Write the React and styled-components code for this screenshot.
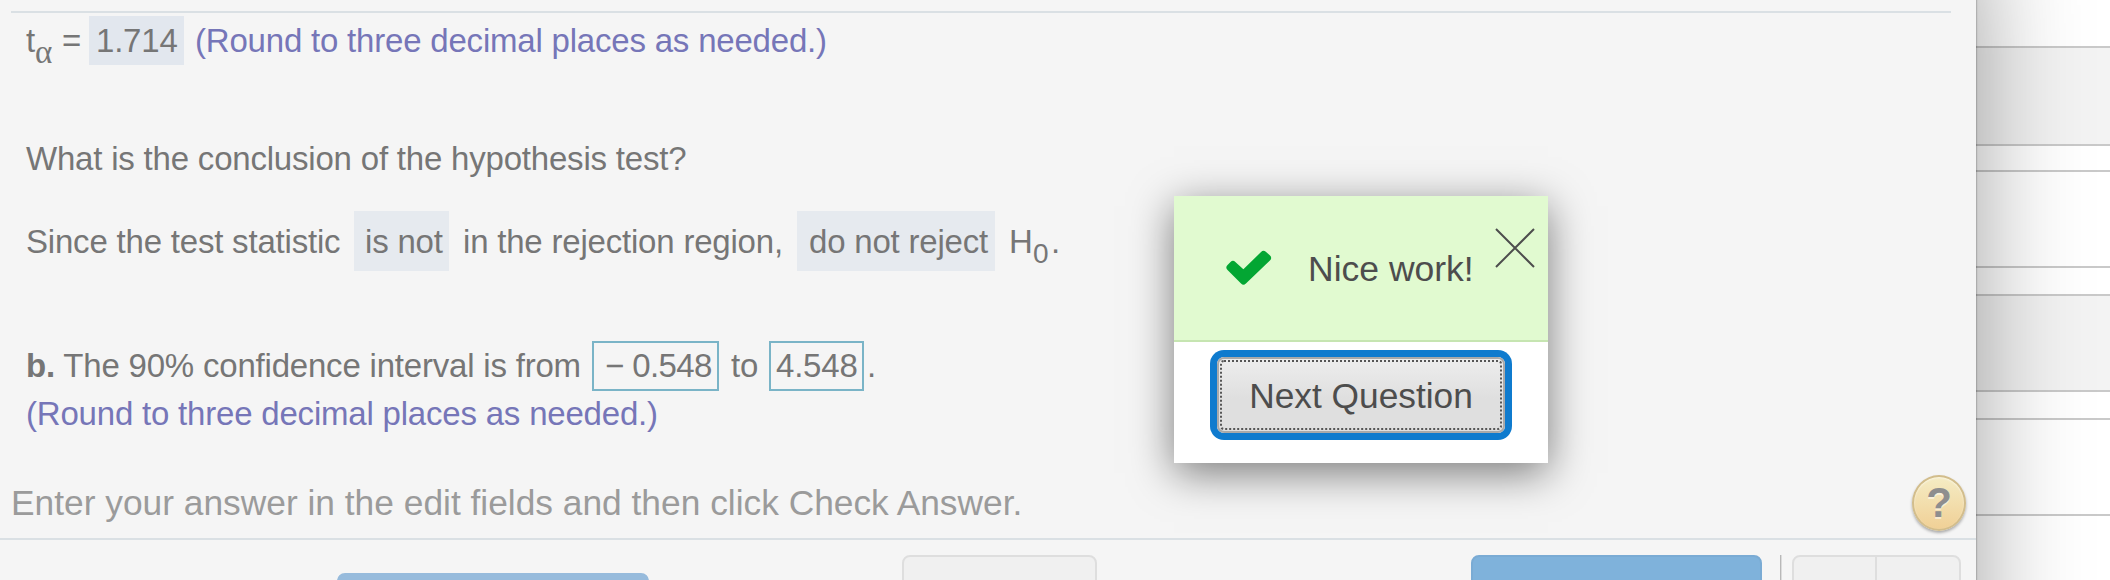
import React from 'react';
import styled, { createGlobalStyle } from 'styled-components';

const Global = createGlobalStyle`
  *, *::before, *::after { box-sizing: border-box; }
  body { margin: 0; background: #fff; overflow: hidden; }
`;

const Page = styled.div`
  position: relative;
  display: flex;
  width: 2110px;
  height: 580px;
  overflow: hidden;
  font-family: "Liberation Sans", Arial, sans-serif;
  color: #767676;
`;

const Player = styled.main`
  position: relative;
  z-index: 1;
  display: flex;
  flex-direction: column;
  width: 1976px;
  height: 580px;
  flex: none;
  background: #f5f5f5;

  &::before {
    content: "";
    position: absolute;
    z-index: -1;
    inset: -60px 0 -200px;
    box-shadow: 0 0 2px rgba(0, 0, 0, 0.5), 0 0 100px rgba(0, 0, 0, 0.38);
  }
`;

const Rule = styled.div`
  flex: none;
  height: 2px;
  margin: ${p => (p.$inset ? '11px 25px 0 11px' : '0')};
  background: #dae0e4;
`;

const Exercise = styled.section`
  display: flex;
  flex-direction: column;
  height: 450px;
  padding-left: 26px;
  font-size: 33px;
  letter-spacing: -0.2px;
`;

const Line = styled.div`
  display: flex;
  align-items: center;
  height: ${p => p.$h}px;
  margin-top: ${p => p.$gap || 0}px;
  line-height: ${p => p.$h}px;
  white-space: pre;
`;

const Phrase = styled.span`
  flex: none;
  width: ${p => (p.$w ? p.$w + 'px' : 'auto')};
  padding-top: ${p => p.$drop || 0}px;
`;

const Hint = styled(Phrase)`
  color: #7676b8;
`;

const Sub = styled.span`
  flex: none;
  width: ${p => p.$w}px;
  padding-top: ${p => p.$drop}px;
  font-family: ${p => (p.$serif ? '"Liberation Serif", serif' : 'inherit')};
  font-size: ${p => p.$size}px;
`;

const Choice = styled.span`
  flex: none;
  width: ${p => p.$w}px;
  height: ${p => p.$h}px;
  padding-left: ${p => p.$pad}px;
  margin: 0 ${p => p.$mr}px ${p => p.$mb || 0}px 0;
  line-height: ${p => p.$lh || p.$h}px;
  background: ${p => p.$bg || '#e6eaef'};
`;

const Field = styled.span`
  flex: none;
  width: ${p => p.$w}px;
  height: 50px;
  padding-left: ${p => p.$pad}px;
  margin-right: ${p => p.$mr}px;
  line-height: 46px;
  letter-spacing: ${p => p.$ls || 0}px;
  border: 2px solid #7ab4c7;
`;

const Prompt = styled.div`
  display: flex;
  align-items: center;
  justify-content: space-between;
  height: 75px;
  padding: 5px 10px 0 11px;
  font-size: 35.35px;
  color: #9b9b9b;
  white-space: nowrap;
`;

const Help = styled.button`
  width: 54px;
  height: 56px;
  padding: 0;
  border: 2px solid #d2bd8c;
  border-radius: 50%;
  background: linear-gradient(#f5ecc4, #f0d096);
  box-shadow: 0 2px 3px rgba(0, 0, 0, 0.3), inset 0 1px 2px rgba(255, 255, 255, 0.6);
  color: #8e8e8e;
  font: bold 42px/50px "Liberation Sans", Arial, sans-serif;
  text-shadow: 0 2px 0 rgba(255, 255, 255, 0.5);
`;

const Footer = styled.footer`
  display: flex;
  align-items: flex-start;
  height: 40px;
  padding: 15px 15px 0 337px;
  overflow: hidden;
`;

const BlueButton = styled.div`
  width: ${p => p.$w}px;
  height: 60px;
  margin: ${p => p.$top || 0}px ${p => p.$mr}px 0 0;
  flex: none;
  border: 2px solid ${p => p.$edge};
  border-radius: 8px;
  background: ${p => p.$bg};
`;

const GreyButton = styled.div`
  display: flex;
  flex: none;
  width: ${p => p.$w}px;
  height: 60px;
  margin-right: ${p => p.$mr || 0}px;
  border: 2px solid #dedede;
  border-radius: 8px;
  background: #f0f0f0;
`;

const Half = styled.div`
  flex: none;
  width: 83px;
  border-right: 2px solid #dedede;
`;

const Separator = styled.div`
  flex: none;
  width: 2px;
  height: 60px;
  margin-right: 10px;
  background: linear-gradient(90deg, #b8b8b8 50%, #dcdcdc 50%);
`;

const Backdrop = styled.aside`
  display: flex;
  flex-direction: column;
  flex: 1;
`;

const Band = styled.div`
  flex: none;
  height: ${p => p.$h}px;
  border-bottom: 2px solid #c9c9c9;
  background: ${p => (p.$grey ? '#f3f3f3' : '#fff')};
`;

const Dialog = styled.div`
  position: absolute;
  z-index: 2;
  left: 1174px;
  top: 196px;
  display: flex;
  flex-direction: column;
  width: 374px;
  height: 267px;
  background: #fff;
  box-shadow: 0 10px 40px rgba(0, 0, 0, 0.5);
  color: #4d4d4d;
`;

const DialogHead = styled.div`
  display: flex;
  align-items: center;
  height: 146px;
  padding: 0 12px 0 52px;
  border-bottom: 2px solid #c6e5b1;
  background: #e1fad0;
  font-size: 35.5px;
`;

const Check = styled.svg`
  flex: none;
  width: 46px;
  height: 36px;
  margin-right: 36px;
`;

const Message = styled.span`
  flex: 1;
  padding-top: 2px;
  white-space: nowrap;
`;

const Close = styled.svg`
  flex: none;
  width: 42px;
  height: 40px;
  margin-bottom: 40px;
`;

const NextButton = styled.button`
  width: 288px;
  height: 76px;
  margin: 15px 0 0 43px;
  padding: 2px 0 0;
  border: 2px solid #a9a9a9;
  border-radius: 7px;
  background: linear-gradient(#ededed, #dfdfdf 55%, #dfdfdf);
  box-shadow: 0 0 0 7px #0f7bce;
  color: #4d4d4d;
  font: 35.3px "Liberation Sans", Arial, sans-serif;
  outline: 2px dotted #555;
  outline-offset: -5px;
  white-space: nowrap;
`;

export default function App() {
  return (
    <Page>
      <Global />
      <Player>
        <Rule $inset />
        <Exercise>
          <Line $h={56}>
            <Phrase $w={9}>t</Phrase>
            <Sub $serif $size={33} $w={27} $drop={21}>α</Sub>
            <Phrase $w={27}>=</Phrase>
            <Choice $w={95} $h={49} $lh={50} $pad={7} $mr={11} $mb={2} $bg="#e2e7ee">1.714</Choice>
            <Hint>(Round to three decimal places as needed.)</Hint>
          </Line>
          <Line $h={50} $gap={65}>
            <Phrase>What is the conclusion of the hypothesis test?</Phrase>
          </Line>
          <Line $h={60} $gap={27}>
            <Phrase $w={328} $drop={2}>Since the test statistic</Phrase>
            <Choice $w={95} $h={60} $lh={62} $pad={11} $mr={14}>is not</Choice>
            <Phrase $w={334} $drop={2}>in the rejection region,</Phrase>
            <Choice $w={198} $h={60} $lh={62} $pad={12} $mr={14}>do not reject</Choice>
            <Phrase $w={24} $drop={2}>H</Phrase>
            <Sub $size={28} $w={18} $drop={25}>0</Sub>
            <Phrase $drop={2}>.</Phrase>
          </Line>
          <Line $h={50} $gap={70}>
            <Phrase $w={566}><b>b.</b> The 90% confidence interval is from</Phrase>
            <Field $w={127} $pad={11} $mr={12} $ls={-0.6}>− 0.548</Field>
            <Phrase $w={38}>to</Phrase>
            <Field $w={95} $pad={5} $mr={3} $ls={-0.2}>4.548</Field>
            <Phrase>.</Phrase>
          </Line>
          <Line $h={46}>
            <Hint>(Round to three decimal places as needed.)</Hint>
          </Line>
        </Exercise>
        <Prompt>
          Enter your answer in the edit fields and then click Check Answer.
          <Help>?</Help>
        </Prompt>
        <Rule />
        <Footer>
          <BlueButton $w={312} $top={18} $mr={253} $bg="#97bbdc" $edge="#97bbdc" />
          <GreyButton $w={195} $mr={374} />
          <BlueButton $w={291} $mr={18} $bg="#7fb2db" $edge="#7aabd4" />
          <Separator />
          <GreyButton $w={169}>
            <Half />
          </GreyButton>
        </Footer>
      </Player>
      <Backdrop>
        <Band $h={48} />
        <Band $h={98} $grey />
        <Band $h={26} />
        <Band $h={96} />
        <Band $h={28} />
        <Band $h={96} $grey />
        <Band $h={28} />
        <Band $h={96} />
      </Backdrop>
      <Dialog role="dialog">
        <DialogHead>
          <Check viewBox="0 0 46 36">
            <path
              d="M4 17.5 L7 14.5 L17.5 24 L37.5 4.5 L41.5 8 L17.5 31 Z"
              fill="#03a633"
              stroke="#03a633"
              strokeWidth="7"
              strokeLinejoin="round"
            />
          </Check>
          <Message>Nice work!</Message>
          <Close viewBox="0 0 42 40">
            <path d="M2 1 L40 39 M40 1 L2 39" stroke="#4d4d4d" strokeWidth="2" />
          </Close>
        </DialogHead>
        <NextButton>Next Question</NextButton>
      </Dialog>
    </Page>
  );
}
